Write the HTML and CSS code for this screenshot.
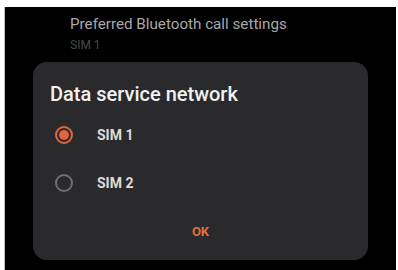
FILE: index.html
```html
<!DOCTYPE html>
<html>
<head>
<meta charset="utf-8">
<link rel="stylesheet" href="styles.css">
</head>
<body>
<div class="screen">
  <div class="pref">
    <div class="pref-title">Preferred Bluetooth call settings</div>
    <div class="pref-sub">SIM 1</div>
  </div>
  <div class="dialog">
    <div class="dialog-title">Data service network</div>
    <div class="options">
      <div class="option">
        <span class="radio checked"><span class="dot"></span></span>
        <span class="label">SIM 1</span>
      </div>
      <div class="option">
        <span class="radio"></span>
        <span class="label">SIM 2</span>
      </div>
    </div>
    <div class="actions"><span class="ok">OK</span></div>
  </div>
</div>
</body>
</html>
```

FILE: styles.css
```css
html, body {
  margin: 0;
  padding: 0;
  background: #ffffff;
}
body {
  font-family: Roboto, "Liberation Sans", sans-serif;
  width: 398px;
  height: 270px;
  overflow: hidden;
}
.screen {
  margin: 7px 0 0 4px;
  width: 392px;
  height: 263px;
  background: #000;
  border-left: 1px solid #bdbdbd;
  box-sizing: border-box;
  padding-top: 7px;
}
.pref {
  padding-left: 65px;
}
.pref-title {
  font-size: 15.2px;
  line-height: 20px;
  color: #a9a9a9;
}
.pref-sub {
  margin-top: 3px;
  font-size: 12px;
  line-height: 16px;
  color: #4a4a4a;
}
.dialog {
  margin: 9px 0 0 28px;
  width: 335px;
  height: 198px;
  box-sizing: border-box;
  background: #2a2a2c;
  border-radius: 14px;
  padding: 20px 0 0 17px;
  display: flex;
  flex-direction: column;
}
.dialog-title {
  font-size: 20px;
  line-height: 24px;
  color: #f2f2f2;
  font-weight: 500;
}
.options {
  margin-top: 5px;
  display: flex;
  flex-direction: column;
}
.option {
  height: 48px;
  display: flex;
  align-items: center;
  padding-left: 5px;
}
.radio {
  width: 18px;
  height: 18px;
  box-sizing: border-box;
  border: 2px solid #6f6f6f;
  border-radius: 50%;
  display: flex;
  align-items: center;
  justify-content: center;
}
.radio.checked {
  border-color: #e0653c;
}
.dot {
  width: 10px;
  height: 10px;
  border-radius: 50%;
  background: #e0653c;
}
.label {
  margin-left: 24px;
  font-size: 14px;
  font-weight: 700;
  color: #dcdcdc;
}
.actions {
  margin-top: 12px;
  display: flex;
  justify-content: center;
  padding-right: 17px;
  height: 24px;
  align-items: center;
}
.ok {
  font-size: 13px;
  font-weight: 700;
  color: #e0703e;
}
```
